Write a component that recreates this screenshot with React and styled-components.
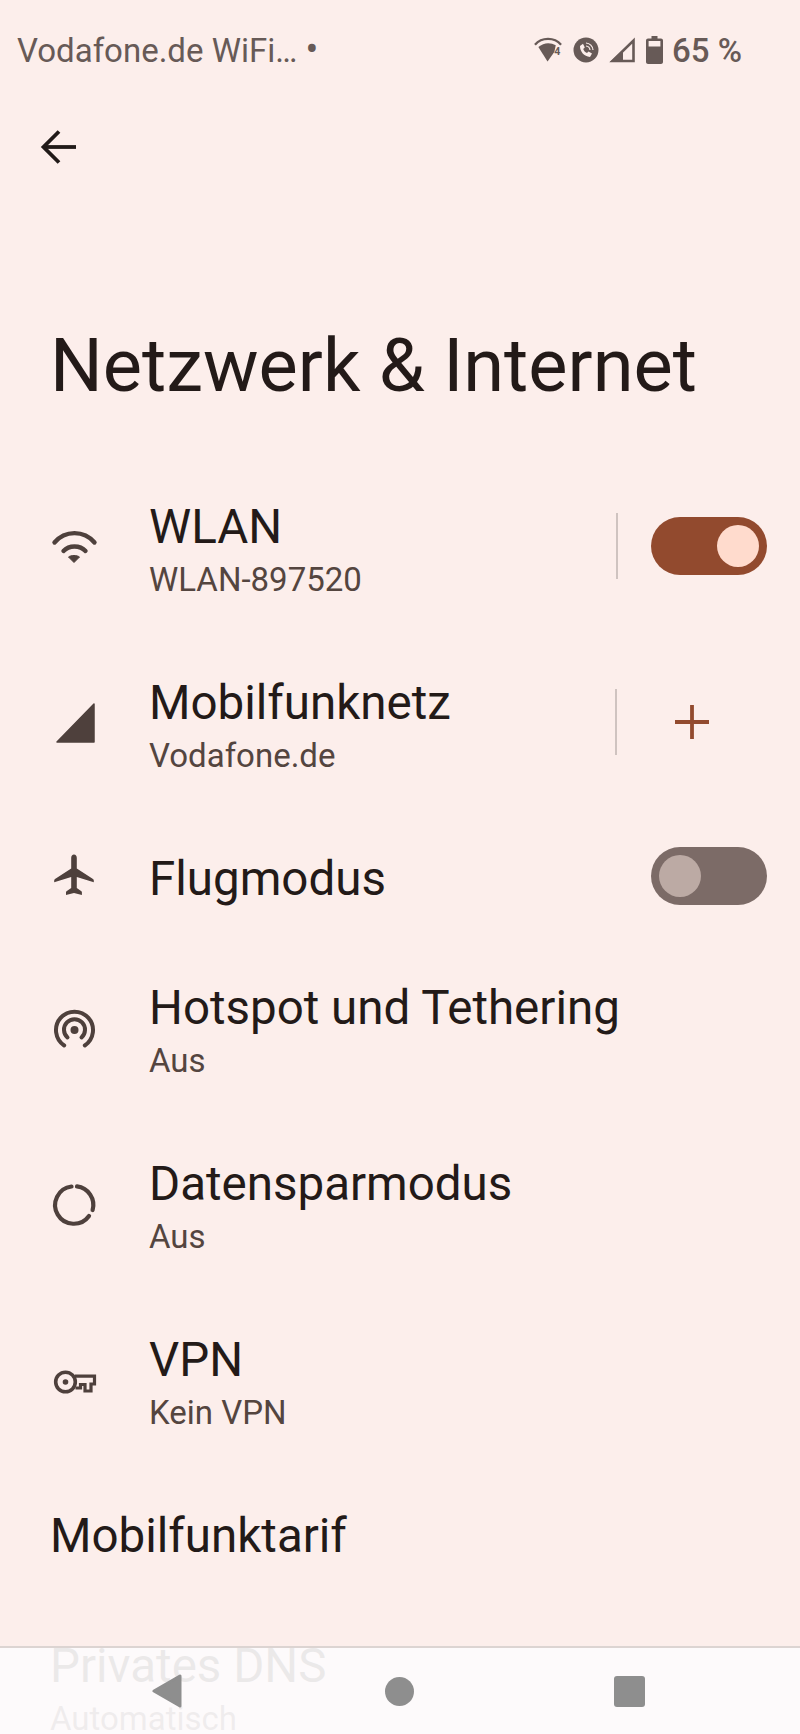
import React from 'react'
import styled, { createGlobalStyle } from 'styled-components'

const GlobalStyle = createGlobalStyle`
  html, body { margin: 0; padding: 0; background: #fceeeb; }
  * { box-sizing: border-box; }
`

const rows = [
  { id: 'wifi', title: 'WLAN', sub: 'WLAN-897520', action: 'on', split: true },
  { id: 'signal', title: 'Mobilfunknetz', sub: 'Vodafone.de', action: 'plus', split: true },
  { id: 'plane', title: 'Flugmodus', action: 'off' },
  { id: 'hotspot', title: 'Hotspot und Tethering', sub: 'Aus' },
  { id: 'saver', title: 'Datensparmodus', sub: 'Aus' },
  { id: 'key', title: 'VPN', sub: 'Kein VPN' },
]

function RowIcon({ id }) {
  const c = '#4e403c'
  if (id === 'wifi') return (
    <svg width="48" height="48" viewBox="0 0 48 48" fill="none">
      <path d="M4.5 20.5 C15 8 34 8 44.5 20.5" stroke={c} strokeWidth="4.4" strokeLinecap="round" />
      <path d="M13.5 29 C19 23 30 23 35.5 29" stroke={c} strokeWidth="4.4" strokeLinecap="round" />
      <path d="M18.5 35 C21 33 27 33 29.5 35 L24 40.5 Z" fill={c} stroke={c} strokeWidth="1" strokeLinejoin="round" />
    </svg>
  )
  if (id === 'signal') return (
    <svg width="48" height="48" viewBox="0 0 48 48">
      <path d="M7 44 L44 6 V44 Z" fill={c} stroke={c} strokeWidth="1.5" strokeLinejoin="round" />
    </svg>
  )
  if (id === 'plane') return (
    <svg width="48" height="48" viewBox="0 0 48 48" fill={c}>
      <path d="M24 2.5 c1.7 0 2.8 1.6 2.8 3.4 V16.5 L43 27 c.7.5 .8 1 .8 1.6 v1.7 L26.8 25.1 V36 l4.6 3.3 c.4.3.5.7.5 1.1 V43 L24 41 16 43 v-2.6 c0-.4 .2-.8 .5-1.1 L21.2 36 V25.1 L4.2 30.3 v-1.7 c0-.7 .2-1.2 .8-1.6 L21.2 16.5 V5.9 c0-1.8 1.1-3.4 2.8-3.4 Z" />
    </svg>
  )
  if (id === 'hotspot') return (
    <svg width="48" height="48" viewBox="0 0 48 48" fill="none" stroke={c} strokeWidth="4" strokeLinecap="round">
      <path d="M14.2 39.5 A18.5 18.5 0 1 1 34.8 39.5" />
      <path d="M17.5 31.5 A10.5 10.5 0 1 1 31.5 31.5" />
      <circle cx="24.5" cy="24" r="4" fill={c} stroke="none" />
    </svg>
  )
  if (id === 'saver') return (
    <svg width="48" height="48" viewBox="0 0 48 48" fill="none" stroke={c} strokeWidth="4.2" strokeLinecap="round">
      <path d="M21.5 4.5 A18.7 18.7 0 1 0 39 34" />
      <path d="M27 4.4 A18.7 18.7 0 0 1 42.6 28" />
    </svg>
  )
  return (
    <svg width="48" height="48" viewBox="0 0 48 48" fill="none">
      <circle cx="15.5" cy="24" r="9.8" stroke={c} strokeWidth="3.6" />
      <circle cx="15.5" cy="24" r="2.8" fill={c} />
      <path d="M25 18.2 H44.5 V26 H41 V33 H35 V26.5 H30.5 V30 H25.5" stroke={c} strokeWidth="3.2" fill="none" strokeLinejoin="miter" />
    </svg>
  )
}

function StatusIcons() {
  const c = '#675a57'
  return (
    <StatusGlyphs>
      <svg width="29" height="26" viewBox="0 0 30 26" fill="none">
        <path d="M1 7.5 C8 -0.5 21 -0.5 28 7.5" stroke={c} strokeWidth="2.4" />
        <path d="M4.5 10 C10 5 17 5 22.5 8 L21 15 L14 25 Z" fill={c} />
        <text x="21" y="18" fontFamily="Roboto" fontSize="11" fontWeight="700" fill={c}>4</text>
      </svg>
      <svg width="26" height="26" viewBox="0 0 26 26" fill="none">
        <circle cx="13" cy="13" r="12.5" fill={c} />
        <path d="M7 9 C7 15 11 19 17 20 L19 16.5 L15.5 14.5 L14 16 C12 15 11 14 10.2 12 L11.8 10.4 L10 6.8 Z" fill="#fceeeb" />
        <path d="M13 9 A4.5 4.5 0 0 1 17 13 M13 6 A7.5 7.5 0 0 1 20 13" stroke="#fceeeb" strokeWidth="1.2" />
      </svg>
      <svg width="27" height="26" viewBox="0 0 27 26" fill="none">
        <path d="M24.5 3.5 V24 H3.5 Z" stroke={c} strokeWidth="2.6" />
        <path d="M1 25 L14 13 V25 Z" fill={c} />
      </svg>
      <svg width="17" height="28" viewBox="0 0 17 28">
        <path d="M5.5 0 H11.5 V2.5 H15 C16 2.5 17 3.3 17 4.5 V26 C17 27.2 16 28 15 28 H2 C1 28 0 27.2 0 26 V4.5 C0 3.3 1 2.5 2 2.5 H5.5 Z" fill={c} />
        <rect x="2.6" y="5" width="11.8" height="5.5" fill="#fceeeb" />
      </svg>
    </StatusGlyphs>
  )
}

export default function App() {
  return (
    <Screen>
      <GlobalStyle />
      <StatusBar>
        <Carrier>Vodafone.de WiFi… <Dot>•</Dot></Carrier>
        <StatusRight>
          <StatusIcons />
          <Percent>65 %</Percent>
        </StatusRight>
      </StatusBar>

      <BackRow>
        <svg width="38" height="38" viewBox="0 0 38 38" fill="none" stroke="#211a18" strokeWidth="3.8">
          <path d="M36 19 H4" />
          <path d="M19 3.5 L3.5 19 L19 34.5" />
        </svg>
      </BackRow>

      <Title>Netzwerk &amp; Internet</Title>

      <List>
        {rows.map(row => (
          <Row key={row.id} $tall={!!row.sub}>
            <IconCell><RowIcon id={row.id} /></IconCell>
            <RowText $split={row.split}>
              <RowTitle>{row.title}</RowTitle>
              {row.sub && <RowSub>{row.sub}</RowSub>}
            </RowText>
            {row.split && <Divider />}
            {row.action === 'plus' && (
              <PlusCell>
                <svg width="34" height="34" viewBox="0 0 34 34" stroke="#924a2e" strokeWidth="3.8">
                  <path d="M17 0 V34 M0 17 H34" />
                </svg>
              </PlusCell>
            )}
            {row.action === 'on' && <Toggle $on><Thumb $on /></Toggle>}
            {row.action === 'off' && <Toggle><Thumb /></Toggle>}
          </Row>
        ))}
        <SectionRow>Mobilfunktarif</SectionRow>
        <FadedRow>
          <RowTitle>Privates DNS</RowTitle>
          <RowSub>Automatisch</RowSub>
        </FadedRow>
      </List>

      <NavBar>
        <svg width="30" height="34" viewBox="0 0 30 34">
          <path d="M28 2 V32 L2 17 Z" fill="#8e8e8e" stroke="#8e8e8e" strokeWidth="3" strokeLinejoin="round" />
        </svg>
        <NavCircle />
        <NavSquare />
      </NavBar>
    </Screen>
  )
}

const Screen = styled.div`
  position: relative;
  width: 800px;
  height: 1734px;
  overflow: hidden;
  background: #fceeeb;
  font-family: Roboto, "Liberation Sans", sans-serif;
  color: #231a18;
`

const StatusBar = styled.div`
  height: 100px;
  padding: 0 58px 0 17px;
  display: flex;
  align-items: center;
  justify-content: space-between;
  color: #675a57;
`

const Carrier = styled.div`
  font-size: 33px;
  white-space: nowrap;
`

const Dot = styled.span`
  font-size: 38px;
  line-height: 30px;
`

const StatusRight = styled.div`
  display: flex;
  align-items: center;
  gap: 9px;
`

const StatusGlyphs = styled.div`
  display: flex;
  align-items: center;
  gap: 10px;
`

const Percent = styled.div`
  font-size: 33px;
  font-weight: 500;
`

const BackRow = styled.div`
  height: 94px;
  padding: 0 0 0 40px;
  display: flex;
  align-items: center;
`

const Title = styled.h1`
  margin: 0;
  height: 264px;
  padding: 124px 0 0 50px;
  font-size: 74px;
  line-height: 96px;
  font-weight: 400;
  color: #231a18;
  white-space: nowrap;
`

const List = styled.div`
  display: flex;
  flex-direction: column;
`

const Row = styled.div`
  height: ${props => (props.$tall ? '176px' : '132px')};
  padding-right: 33px;
  display: flex;
  align-items: center;
`

const IconCell = styled.div`
  width: 149px;
  padding-left: 50px;
  flex-shrink: 0;
  display: flex;
  align-items: center;
`

const RowText = styled.div`
  flex: 1;
  min-width: 0;
  padding-top: ${props => (props.$split ? '11px' : '6px')};
`

const FadedRow = styled.div`
  height: 176px;
  padding: 36px 0 0 50px;
`

const RowTitle = styled.div`
  font-size: 47.5px;
  line-height: 56px;
  color: #231a18;
  white-space: nowrap;
`

const RowSub = styled.div`
  font-size: 33px;
  line-height: 50px;
  color: #54453f;
`

const Divider = styled.div`
  width: 2px;
  height: 66px;
  background: #cfc3c0;
`

const PlusCell = styled.div`
  width: 150px;
  padding-left: 58px;
  display: flex;
  align-items: center;
`

const Toggle = styled.div`
  margin-left: ${props => (props.$on ? '33px' : '0')};
  width: 116px;
  height: 58px;
  padding: 0 8px;
  border-radius: 29px;
  display: flex;
  align-items: center;
  justify-content: ${props => (props.$on ? 'flex-end' : 'flex-start')};
  background: ${props => (props.$on ? '#924a2e' : '#7c6b67')};
`

const Thumb = styled.div`
  width: 42px;
  height: 42px;
  border-radius: 50%;
  background: ${props => (props.$on ? '#ffdbcd' : '#bcaaa4')};
`

const SectionRow = styled.div`
  height: 132px;
  padding-left: 50px;
  display: flex;
  align-items: center;
  font-size: 47.5px;
  color: #231a18;
`

const NavBar = styled.div`
  position: absolute;
  left: 0;
  right: 0;
  bottom: 0;
  height: 88px;
  padding: 0 155px 0 152px;
  border-top: 2px solid #dcd4d2;
  background: rgba(253, 251, 252, 0.92);
  display: flex;
  align-items: center;
  justify-content: space-between;
`

const NavCircle = styled.div`
  width: 29px;
  height: 29px;
  margin-left: 2px;
  border-radius: 50%;
  background: #8e8e8e;
`

const NavSquare = styled.div`
  width: 31px;
  height: 31px;
  border-radius: 3px;
  background: #8e8e8e;
`
